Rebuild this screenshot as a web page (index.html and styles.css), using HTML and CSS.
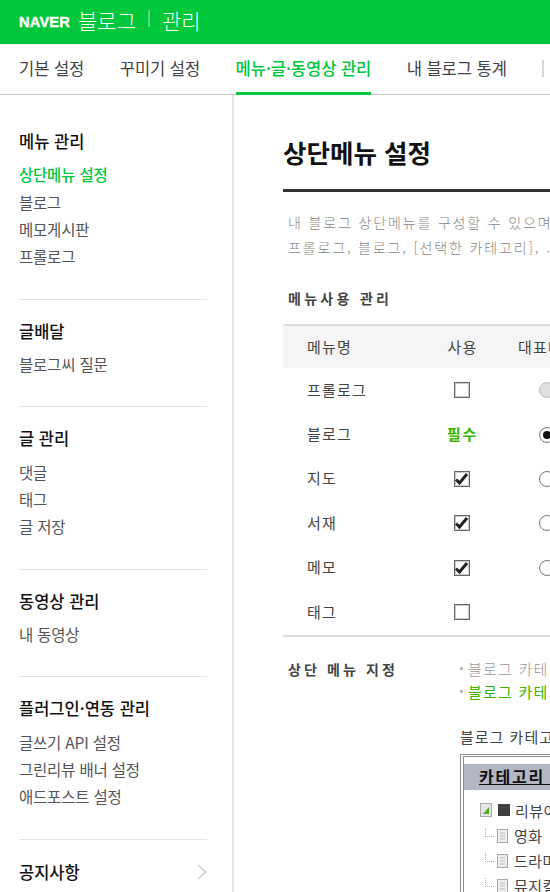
FILE: index.html
```html
<!DOCTYPE html>
<html lang="ko">
<head>
<meta charset="utf-8">
<title>블로그 관리</title>
<link rel="stylesheet" href="styles.css">
</head>
<body>
<header class="top">
  <span class="naver">NAVER</span><span class="brand">블로그</span><span class="sep"></span><span class="brand">관리</span>
</header>
<nav class="tabs">
  <a class="tab">기본 설정</a>
  <a class="tab">꾸미기 설정</a>
  <a class="tab active">메뉴·글·동영상 관리</a>
  <a class="tab">내 블로그 통계</a>
  <span class="tab-sep"></span>
</nav>
<div class="main">
  <aside class="side">
    <section class="group first">
      <h3>메뉴 관리</h3>
      <a class="on">상단메뉴 설정</a><a>블로그</a><a>메모게시판</a><a>프롤로그</a>
    </section>
    <section class="group">
      <h3>글배달</h3>
      <a>블로그씨 질문</a>
    </section>
    <section class="group">
      <h3>글 관리</h3>
      <a>댓글</a><a>태그</a><a>글 저장</a>
    </section>
    <section class="group">
      <h3>동영상 관리</h3>
      <a>내 동영상</a>
    </section>
    <section class="group">
      <h3>플러그인·연동 관리</h3>
      <a>글쓰기 API 설정</a><a>그린리뷰 배너 설정</a><a>애드포스트 설정</a>
    </section>
    <section class="group notice">
      <h3>공지사항</h3>
      <svg class="chev" width="10" height="16" viewBox="0 0 10 16"><path d="M1 1l7.5 7L1 15" fill="none" stroke="#c4c4c4" stroke-width="1.2"/></svg>
    </section>
  </aside>
  <main class="content">
    <h1>상단메뉴 설정</h1>
    <div class="intro">
      <p>내 블로그 상단메뉴를 구성할 수 있으며</p>
      <p>프롤로그, 블로그, [선택한 카테고리], .</p>
    </div>
    <h2 class="sub">메뉴사용 관리</h2>
    <div class="table">
      <div class="row head"><span class="name">메뉴명</span><span class="use">사용</span><span class="rep">대표메뉴</span></div>
      <div class="row"><span class="name">프롤로그</span><span class="use"><i class="cb"></i></span><span class="rep"><i class="radio off"></i></span></div>
      <div class="row"><span class="name">블로그</span><span class="use must">필수</span><span class="rep"><i class="radio sel"></i></span></div>
      <div class="row"><span class="name">지도</span><span class="use"><i class="cb"><svg width="16" height="14" viewBox="0 0 16 14"><path d="M2 7.5l3.5 3.5 7.5-9" fill="none" stroke="#222" stroke-width="3"/></svg></i></span><span class="rep"><i class="radio"></i></span></div>
      <div class="row"><span class="name">서재</span><span class="use"><i class="cb"><svg width="16" height="14" viewBox="0 0 16 14"><path d="M2 7.5l3.5 3.5 7.5-9" fill="none" stroke="#222" stroke-width="3"/></svg></i></span><span class="rep"><i class="radio"></i></span></div>
      <div class="row"><span class="name">메모</span><span class="use"><i class="cb"><svg width="16" height="14" viewBox="0 0 16 14"><path d="M2 7.5l3.5 3.5 7.5-9" fill="none" stroke="#222" stroke-width="3"/></svg></i></span><span class="rep"><i class="radio"></i></span></div>
      <div class="row"><span class="name">태그</span><span class="use"><i class="cb"></i></span><span class="rep"></span></div>
    </div>
    <div class="assign">
      <h2 class="sub">상단 메뉴 지정</h2>
      <div class="assign-body">
        <p class="note">블로그 카테.</p>
        <p class="note green">블로그 카테.</p>
        <p class="cat-label">블로그 카테고</p>
        <div class="tree">
          <div class="tree-head"><u>카테고리&nbsp;&nbsp;</u></div>
          <div class="node root">
            <svg class="ico big" width="12" height="14" viewBox="0 0 12 14"><rect x=".5" y=".5" width="11" height="13" fill="#e4e4e4" stroke="#aaa"/><path d="M3 11L9 4v7z" fill="#4caf1c"/></svg>
            <i class="sq"></i>리뷰어
          </div>
          <div class="node"><i class="dots"></i><svg class="ico" width="11" height="14" viewBox="0 0 11 14"><rect x=".5" y=".5" width="10" height="13" fill="#eee" stroke="#aaa"/><path d="M3 4h5M3 7h5M3 10h5" stroke="#bbb"/></svg>영화</div>
          <div class="node"><i class="dots"></i><svg class="ico" width="11" height="14" viewBox="0 0 11 14"><rect x=".5" y=".5" width="10" height="13" fill="#eee" stroke="#aaa"/><path d="M3 4h5M3 7h5M3 10h5" stroke="#bbb"/></svg>드라마</div>
          <div class="node"><i class="dots"></i><svg class="ico" width="11" height="14" viewBox="0 0 11 14"><rect x=".5" y=".5" width="10" height="13" fill="#eee" stroke="#aaa"/><path d="M3 4h5M3 7h5M3 10h5" stroke="#bbb"/></svg>뮤지컬</div>
        </div>
      </div>
    </div>
  </main>
</div>
</body>
</html>
```
FILE: styles.css
```css
* { box-sizing: border-box; }
html, body { margin: 0; padding: 0; height: 892px; overflow: hidden; background: #fff; }
body { font-family: "Noto Sans CJK KR", "Noto Sans", sans-serif; color: #333; width: 550px; }
h1, h2, h3, p { margin: 0; }
i { font-style: normal; }

.top { height: 44px; background: #00c73c; border-bottom: 1px solid #00b837; display: flex; align-items: center; padding-left: 19px; color: #fff; white-space: nowrap; }
.naver { font-family: "Liberation Sans", sans-serif; font-weight: 700; font-size: 14.6px; letter-spacing: .2px; margin-right: 8px; -webkit-text-stroke: .4px #fff; }
.brand { font-size: 21px; font-weight: 300; line-height: 28px; position: relative; top: -2px; }
.sep { width: 2px; height: 17px; background: rgba(255,255,255,.35); margin: 0 12px; position: relative; top: -3px; }

.tabs { height: 51px; border-bottom: 1px solid #c8c8c8; display: flex; align-items: stretch; padding-left: 19px; gap: 35.5px; white-space: nowrap; }
.tab { font-size: 16.6px; line-height: 48px; color: #444; letter-spacing: -.1px; height: 51px; }
.tab.active { color: #00c73c; font-weight: 500; border-bottom: 3px solid #00c73c; }
.tab-sep { width: 2px; height: 17px; background: #d8d8d8; margin-top: 16px; }

.main { display: flex; height: 797px; }
.side { width: 234px; flex: none; border-right: 2px solid #e4e4e4; padding: 0 25px 0 19px; }
.group { border-top: 1px solid #e4e4e4; padding: 19px 0 28px; }
.group.first { border-top: 0; padding-top: 34px; }
.group h3 { font-size: 16.5px; font-weight: 500; line-height: 24px; color: #111; margin-bottom: 8.2px; }
.group a { display: block; font-size: 15.5px; line-height: 27.4px; color: #555; letter-spacing: -.2px; white-space: nowrap; }
.group a.on { color: #00c73c; font-weight: 500; }
.notice { display: flex; justify-content: space-between; align-items: center; padding-top: 20px; }
.notice h3 { margin: 0; }

.content { flex: 1; min-width: 0; padding: 37px 0 0 49px; overflow: hidden; white-space: nowrap; }
h1 { font-size: 25.5px; font-weight: 700; color: #111; line-height: 40px; padding-bottom: 17px; border-bottom: 3px solid #333; margin-right: -100px; }
.intro { padding: 18px 0 0 5px; font-size: 14px; line-height: 25px; color: #888; letter-spacing: 1.85px; font-weight: 300; }
.sub { font-size: 14px; font-weight: 700; color: #444; letter-spacing: 3.3px; line-height: 20px; }
.intro + .sub { padding: 28px 0 16px 5px; box-sizing: content-box; }

.table { border-top: 2px solid #ddd; border-bottom: 2px solid #ddd; width: 400px; padding-bottom: 2px; }
.row { display: flex; height: 44.4px; align-items: center; font-size: 15px; color: #444; letter-spacing: 1.2px; }
.row.head { height: 42px; background: #f5f5f5; margin-bottom: -1px; padding-bottom: 2px; }
.name { width: 142px; padding-left: 24px; }
.use { width: 75px; text-align: center; }
.use.must { color: #3bb300; font-weight: 700; letter-spacing: 1.6px; }
.rep { padding-left: 39px; }
.row.head .rep { padding-left: 18px; }
.cb { display: block; width: 16px; height: 16px; margin: 0 auto; position: relative; left: -1px; top: 1px; border: 1px solid #666; background: #fff; box-shadow: inset 0 0 0 1px #ccc; }
.cb svg { display: block; position: absolute; left: -1px; top: 0; }
.radio { display: block; width: 16px; height: 16px; border: 1px solid #777; border-radius: 50%; background: #fff; position: relative; top: 1px; }
.radio.off { background: #e0e0e0; border-color: #bbb; }
.radio.sel::after { content: ""; position: absolute; left: 3px; top: 3px; width: 8px; height: 8px; background: #111; border-radius: 50%; }

.assign { display: flex; padding: 22px 0 0 5px; }
.assign > .sub { width: 172px; flex: none; letter-spacing: 3.1px; }
.assign-body { flex: none; width: 300px; margin-top: -2px; }
.note { font-size: 15px; line-height: 23px; color: #999; letter-spacing: 1.2px; padding-left: 8px; position: relative; font-weight: 300; }
.note::before { content: ""; position: absolute; left: 0; top: 10px; width: 3px; height: 3px; background: #bbb; }
.note.green { color: #3bb300; font-weight: 400; }
.cat-label { font-size: 15px; line-height: 20px; color: #444; letter-spacing: 1px; margin-top: 24px; }
.tree { margin-top: 7px; border: 1px solid #8e8e86; border-left: 4px double #8e8e86; border-top: 3px double #8e8e86; width: 300px; height: 200px; padding-top: 7px; font-size: 15px; color: #444; letter-spacing: .5px; }
.tree-head { height: 26px; background: #b3b6c3; padding-left: 15px; font-size: 16px; font-weight: 700; color: #111; line-height: 25px; letter-spacing: 1.8px; }
.node { display: flex; align-items: center; height: 25px; padding-left: 21px; }
.node.root { padding-left: 16px; height: 33px; padding-top: 7px; }
.ico { margin-right: 6px; flex: none; }
.sq { width: 12px; height: 12px; background: #3f3f3f; margin-right: 5px; }
.dots { width: 9px; height: 9px; margin-right: 3px; border-left: 1px dotted #aaa; border-bottom: 1px dotted #aaa; position: relative; top: -3px; }
```
